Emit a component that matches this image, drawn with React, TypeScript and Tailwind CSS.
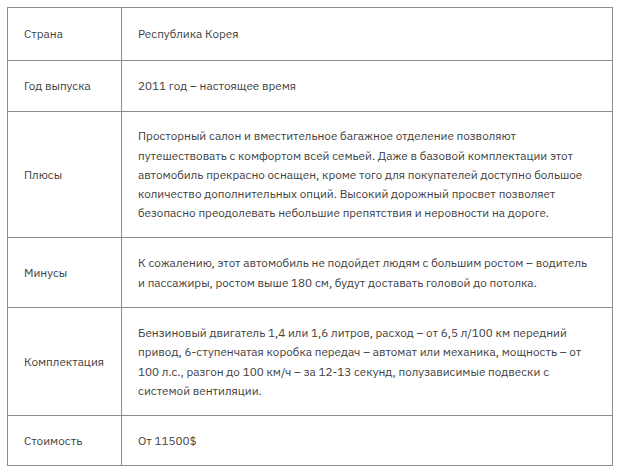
import React from "react";

const rows: { label: string; lines: string[]; h: string }[] = [
  { label: "Страна", lines: ["Республика Корея"], h: "h-[52px]" },
  { label: "Год выпуска", lines: ["2011 год – настоящее время"], h: "h-[51px]" },
  {
    label: "Плюсы",
    lines: [
      "Просторный салон и вместительное багажное отделение позволяют",
      "путешествовать с комфортом всей семьей. Даже в базовой комплектации этот",
      "автомобиль прекрасно оснащен, кроме того для покупателей доступно большое",
      "количество дополнительных опций. Высокий дорожный просвет позволяет",
      "безопасно преодолевать небольшие препятствия и неровности на дороге.",
    ],
    h: "h-[126px]",
  },
  {
    label: "Минусы",
    lines: [
      "К сожалению, этот автомобиль не подойдет людям с большим ростом – водитель",
      "и пассажиры, ростом выше 180 см, будут доставать головой до потолка.",
    ],
    h: "h-[70px]",
  },
  {
    label: "Комплектация",
    lines: [
      "Бензиновый двигатель 1,4 или 1,6 литров, расход – от 6,5 л/100 км передний",
      "привод, 6-ступенчатая коробка передач – автомат или механика, мощность – от",
      "100 л.с., разгон до 100 км/ч – за 12-13 секунд, полузависимые подвески с",
      "системой вентиляции.",
    ],
    h: "h-[108px]",
  },
  { label: "Стоимость", lines: ["От 11500$"], h: "h-[50px]" },
];

export default function App() {
  return (
    <div className="w-[620px] h-[472px] bg-white pt-[7px] pl-[7px] font-['IBM_Plex_Sans','Noto_Sans',sans-serif] text-[11.7px] leading-[19.3px] text-[#404040]">
      <div className="w-[606px] border border-[#8c8c8c]">
        {rows.map((r, i) => (
          <div
            key={i}
            className={`grid grid-cols-[114px_1fr] ${r.h} ${i > 0 ? "border-t border-[#8c8c8c]" : ""}`}
          >
            <div className="flex items-center pl-[16px] border-r border-[#8c8c8c]">{r.label}</div>
            <div className="flex flex-col justify-center pl-[16px] whitespace-nowrap">
              {r.lines.map((l, j) => (
                <div key={j}>{l}</div>
              ))}
            </div>
          </div>
        ))}
      </div>
    </div>
  );
}
